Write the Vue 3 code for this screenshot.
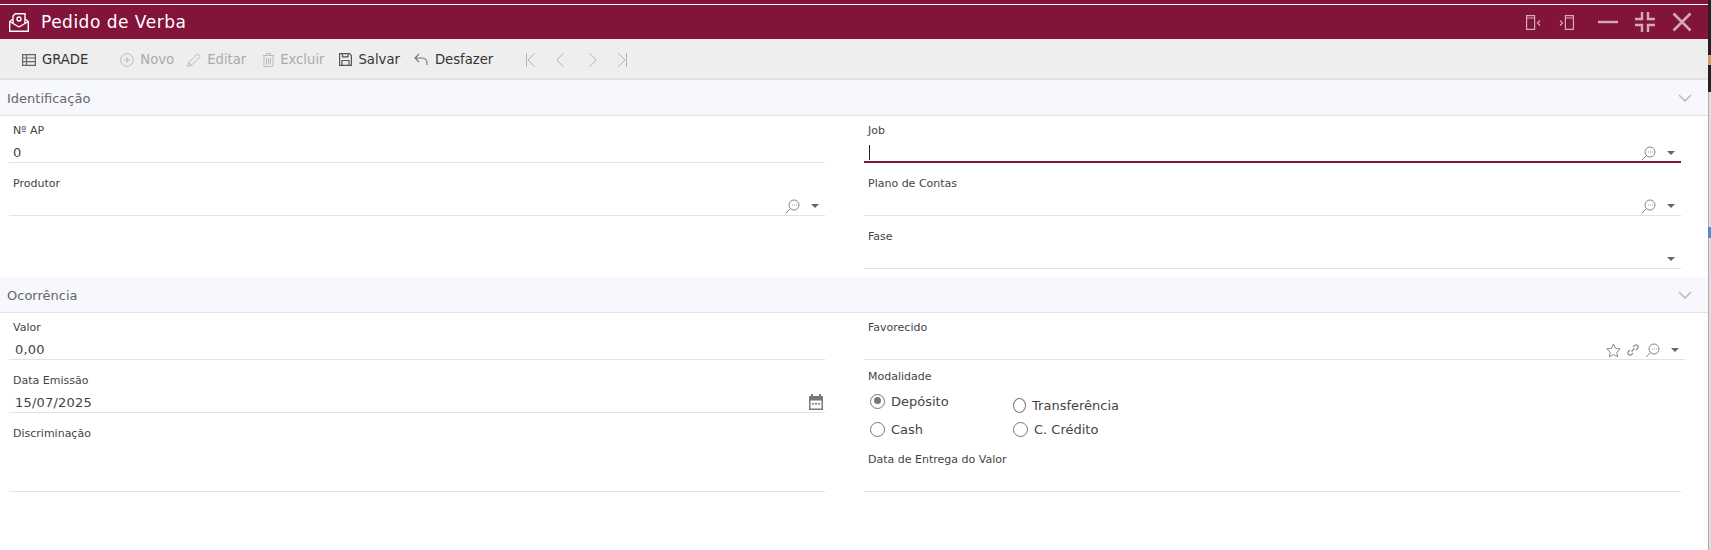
<template>
  <div class="page">
    <div class="window">
      <header class="titlebar">
        <div class="title">
          <svg class="title-icon" width="20" height="19" viewBox="0 0 20 19" fill="none" stroke="#fff" stroke-width="1.4">
            <path d="M4 6 .7 8.500v9.800h18.600V8.500L16 6" />
            <path d="M.7 8.500 10 14l9.300-5.500" />
            <path d="M4 10.500V3l2.300-2.300H16v9.800" />
            <circle cx="10" cy="6" r="2" />
          </svg>
          <span>Pedido de Verba</span>
        </div>
        <div class="win-buttons">
          <svg width="15" height="15" viewBox="0 0 15 15" fill="none" stroke="#d3aab9" stroke-width="1.200">
            <path d="M.6.6h8v13.800h-8zM.6 3h8" />
            <path d="M14 5.500 11.500 8l2.500 2.500" />
          </svg>
          <svg class="wb-second" width="15" height="15" viewBox="0 0 15 15" fill="none" stroke="#d3aab9" stroke-width="1.200">
            <path d="M6.400.6h8v13.800h-8zM6.400 3h8" />
            <path d="M1 5.500 3.500 8 1 10.500" />
          </svg>
          <svg class="wb-min" width="20" height="20" viewBox="0 0 20 20" fill="none" stroke="#d3aab9" stroke-width="2.400">
            <path d="M0 10h20" />
          </svg>
          <svg class="wb-max" width="20" height="20" viewBox="0 0 20 20" fill="none" stroke="#d3aab9" stroke-width="2.400">
            <path d="M7 0v7H0M13 0v7h7M7 20v-7H0M13 20v-7h7" />
          </svg>
          <svg class="wb-close" width="20" height="20" viewBox="0 0 20 20" fill="none" stroke="#d3aab9" stroke-width="2.600">
            <path d="M1.500 1.500l17 17M18.500 1.500l-17 17" />
          </svg>
        </div>
      </header>

      <nav class="toolbar">
        <button class="tool grade">
          <svg width="14" height="12" viewBox="0 0 14 12" fill="none" stroke="#666" stroke-width="1.200">
            <path d="M.6.6h12.800v10.800H.6zM.6 4h12.800M.6 7.700h12.800M4.500.6v10.800" />
          </svg>
          GRADE
        </button>
        <button class="tool off novo">
          <svg width="14" height="14" viewBox="0 0 14 14" fill="none" stroke="#bbb" stroke-width="1">
            <circle cx="7" cy="7" r="6.300" />
            <path d="M7 4v6M4 7h6" />
          </svg>
          Novo
        </button>
        <button class="tool off editar">
          <svg width="14" height="14" viewBox="0 0 14 14" fill="none" stroke="#bbb" stroke-width="1">
            <path d="M.7 13.300 1.700 9.500 10.500.8l2.700 2.700-8.800 8.800zM1.700 9.500l2.700 2.800" />
          </svg>
          Editar
        </button>
        <button class="tool off excluir">
          <svg width="11" height="14" viewBox="0 0 11 14" fill="none" stroke="#bbb" stroke-width="1">
            <path d="M0 2.500h11M3.500 2.500V.5h4v2M1 2.500v11h9v-11M3.500 5v6.500M5.500 5v6.500M7.500 5v6.500" />
          </svg>
          Excluir
        </button>
        <button class="tool salvar">
          <svg width="13" height="13" viewBox="0 0 13 13" fill="none" stroke="#555" stroke-width="1.200">
            <path d="M.6.6h9.800l2 2v9.800H.6zM3.500.6v3.200h5.500V.6M3 12.400V7.500h7v4.900" />
          </svg>
          Salvar
        </button>
        <button class="tool desfazer">
          <svg width="14" height="13" viewBox="0 0 14 13" fill="none" stroke="#777" stroke-width="1.100">
            <path d="M5 1 1 5l4 4M1 5h7c3 0 5 2 5 5v2" />
          </svg>
          Desfazer
        </button>
        <div class="pager">
          <svg width="10" height="14" viewBox="0 0 10 14" fill="none" stroke="#b5b5b5" stroke-width="1"><path d="M.5 0v14M9 0 2 7l7 7" /></svg>
          <svg class="p2" width="8" height="14" viewBox="0 0 8 14" fill="none" stroke="#b5b5b5" stroke-width="1"><path d="M7.500 0 1 7l6.500 7" /></svg>
          <svg class="p3" width="8" height="14" viewBox="0 0 8 14" fill="none" stroke="#b5b5b5" stroke-width="1"><path d="M.5 0 7 7l-6.500 7" /></svg>
          <svg class="p4" width="10" height="14" viewBox="0 0 10 14" fill="none" stroke="#b5b5b5" stroke-width="1"><path d="M9.500 0v14M1 0l7 7-7 7" /></svg>
        </div>
      </nav>

      <section class="section-head">
        <span>Identificação</span>
        <svg width="14" height="8" viewBox="0 0 14 8" fill="none" stroke="#bbb" stroke-width="1.500"><path d="M1 1l6 6 6-6" /></svg>
      </section>
      <div class="columns first">
        <div class="col">
          <div class="field">
            <label>Nº AP</label>
            <div class="value">0</div>
          </div>
          <div class="field">
            <label>Produtor</label>
            <div class="value">
              <span class="icons">
                <svg class="lookup" width="15" height="15" viewBox="0 0 15 15" fill="none" stroke="#888" stroke-width="1"><circle cx="9" cy="6" r="5" /><path d="M5.500 9.500 1 14M7 6h.8M9 6h.8M11 6h.8" /></svg>
                <i class="caret"></i>
              </span>
            </div>
          </div>
        </div>
        <div class="col">
          <div class="field focused">
            <label>Job</label>
            <div class="value">
              <i class="cursor"></i>
              <span class="icons">
                <svg class="lookup" width="15" height="15" viewBox="0 0 15 15" fill="none" stroke="#888" stroke-width="1"><circle cx="9" cy="6" r="5" /><path d="M5.500 9.500 1 14M7 6h.8M9 6h.8M11 6h.8" /></svg>
                <i class="caret"></i>
              </span>
            </div>
          </div>
          <div class="field">
            <label>Plano de Contas</label>
            <div class="value">
              <span class="icons">
                <svg class="lookup" width="15" height="15" viewBox="0 0 15 15" fill="none" stroke="#888" stroke-width="1"><circle cx="9" cy="6" r="5" /><path d="M5.500 9.500 1 14M7 6h.8M9 6h.8M11 6h.8" /></svg>
                <i class="caret"></i>
              </span>
            </div>
          </div>
          <div class="field">
            <label>Fase</label>
            <div class="value">
              <span class="icons"><i class="caret"></i></span>
            </div>
          </div>
        </div>
      </div>

      <section class="section-head">
        <span>Ocorrência</span>
        <svg width="14" height="8" viewBox="0 0 14 8" fill="none" stroke="#bbb" stroke-width="1.500"><path d="M1 1l6 6 6-6" /></svg>
      </section>
      <div class="columns">
        <div class="col">
          <div class="field">
            <label>Valor</label>
            <div class="value indent">0,00</div>
          </div>
          <div class="field">
            <label>Data Emissão</label>
            <div class="value indent">
              15/07/2025
              <span class="icons">
                <svg class="calendar" width="14" height="16" viewBox="0 0 14 16" fill="#777">
                  <path d="M2 0h2v2h6V0h2v2h2v14H0V2h2zM1.500 6.500v8h11v-8z" />
                  <path d="M3 9h2v1.500H3zM6 9h2v1.500H6zM9 9h2v1.500H9z" />
                </svg>
              </span>
            </div>
          </div>
          <div class="field tall">
            <label>Discriminação</label>
            <div class="value"></div>
          </div>
        </div>
        <div class="col">
          <div class="field wide">
            <label>Favorecido</label>
            <div class="value">
              <span class="icons">
                <svg class="star" width="15" height="15" viewBox="0 0 15 15" fill="none" stroke="#888" stroke-width="1"><path d="M7.500 1l2 4.300 4.700.6-3.400 3.200.9 4.700-4.200-2.300-4.200 2.300.9-4.700L.8 5.900l4.700-.6z" /></svg>
                <svg class="link" width="12" height="12" viewBox="0 0 12 12" fill="none" stroke="#888" stroke-width="1.100"><path d="M4.500 7.500l3-3M6 3l1.500-1.500a2.100 2.100 0 0 1 3 3L9 6M6 9l-1.500 1.500a2.100 2.100 0 0 1-3-3L3 6" /></svg>
                <svg class="lookup" width="15" height="15" viewBox="0 0 15 15" fill="none" stroke="#888" stroke-width="1"><circle cx="9" cy="6" r="5" /><path d="M5.500 9.500 1 14M7 6h.8M9 6h.8M11 6h.8" /></svg>
                <i class="caret"></i>
              </span>
            </div>
          </div>
          <div class="radio-field">
            <label>Modalidade</label>
            <div class="radios">
              <div class="radio-col">
                <div class="radio"><i class="dot on"></i>Depósito</div>
                <div class="radio"><i class="dot"></i>Cash</div>
              </div>
              <div class="radio-col second">
                <div class="radio"><i class="dot"></i>Transferência</div>
                <div class="radio"><i class="dot"></i>C. Crédito</div>
              </div>
            </div>
          </div>
          <div class="field entrega">
            <label>Data de Entrega do Valor</label>
            <div class="value"></div>
          </div>
        </div>
      </div>
    </div>
    <aside class="edge">
      <div class="edge-dark"><i class="mark-orange"></i></div>
      <i class="mark-blue"></i>
    </aside>
  </div>
</template>

<script setup>
</script>

<style>
body {
  margin: 0;
  background: #fff;
}
</style>

<style scoped>
.page {
  display: flex;
  height: 550px;
  font-family: "DejaVu Sans", sans-serif;
  color: #444;
  overflow: hidden;
}

.window {
  flex: 1;
  min-width: 0;
}

.edge {
  width: 3px;
  background: linear-gradient(90deg, #aaa 1px, #dedede 1px);
}

.edge-dark {
  height: 92px;
  padding-top: 55px;
  box-sizing: border-box;
  background: #222;
}

.mark-orange {
  display: block;
  height: 10px;
  background: #c8a060;
}

.mark-blue {
  display: block;
  height: 11px;
  margin-top: 135px;
  background: #4a8fd0;
}

.titlebar {
  box-sizing: border-box;
  display: flex;
  justify-content: space-between;
  align-items: center;
  height: 39px;
  padding: 5px 16px 0 9px;
  background: #82133a;
  box-shadow: inset 0 4px 0 #82133a, inset 0 5px 0 #fff;
}

.title {
  display: flex;
  align-items: center;
  gap: 12px;
  color: #fff;
  font-size: 17px;
  letter-spacing: 0.5px;
}

.win-buttons {
  display: flex;
  align-items: center;
}

.wb-second {
  margin-left: 18px;
}

.wb-min {
  margin-left: 24px;
}

.wb-max {
  margin-left: 17px;
}

.wb-close {
  margin-left: 17px;
}

.toolbar {
  box-sizing: border-box;
  display: flex;
  align-items: center;
  height: 41px;
  padding: 2px 0 0 22px;
  background: #eee;
  border-bottom: 2px solid #e2e2e2;
}

.tool {
  display: flex;
  align-items: center;
  gap: 6px;
  padding: 0;
  border: 0;
  background: none;
  font: inherit;
  font-size: 13.200px;
  color: #333;
}

.tool.off {
  color: #aaa;
}

.novo {
  margin-left: 32px;
}

.editar {
  margin-left: 13px;
}

.excluir {
  margin-left: 17px;
}

.salvar {
  margin-left: 15px;
}

.desfazer {
  margin-left: 14px;
  gap: 7px;
}

.pager {
  display: flex;
  align-items: center;
  margin-left: 33px;
}

.p2 {
  margin-left: 20px;
}

.p3 {
  margin-left: 25px;
}

.p4 {
  margin-left: 20px;
}

.section-head {
  box-sizing: border-box;
  display: flex;
  justify-content: space-between;
  align-items: center;
  height: 36px;
  padding: 1px 16px 0 7px;
  background: #f7f8fd;
  border-bottom: 1px solid #e2e2e2;
  font-size: 13px;
  color: #666;
}

.columns {
  display: flex;
  gap: 39px;
  padding: 0 27px 0 9px;
}

.columns.first {
  padding-bottom: 8px;
}

.col {
  flex: 1;
  min-width: 0;
}

.col:first-child {
  flex: 0 0 816px;
}

.field {
  box-sizing: border-box;
  height: 47px;
  margin-top: 6px;
  padding-left: 4px;
  border-bottom: 1px solid #e2e2e2;
}

.field:first-child {
  margin-top: 0;
}

.field label,
.radio-field label {
  display: block;
  padding-top: 8px;
  font-size: 11px;
  line-height: 14px;
}

.value {
  position: relative;
  height: 22px;
  margin-top: 4px;
  font-size: 13px;
  line-height: 22px;
  letter-spacing: 0.2px;
}

.value.indent {
  padding-left: 2px;
}

.field.tall {
  height: 73px;
}

.field.wide {
  margin-right: -4px;
}

.field.focused {
  border-bottom: 2px solid #82133a;
}

.field.entrega {
  margin-top: 0;
}

.cursor {
  position: absolute;
  left: 1px;
  top: 3px;
  width: 1px;
  height: 15px;
  background: #222;
}

.icons {
  position: absolute;
  right: 6px;
  top: 0;
  display: flex;
  align-items: center;
  height: 22px;
}

.lookup {
  margin-right: 11px;
}

.caret {
  width: 0;
  height: 0;
  border-left: 4px solid transparent;
  border-right: 4px solid transparent;
  border-top: 4px solid #666;
}

.star {
  margin-right: 6px;
}

.link {
  margin-right: 6px;
}

.calendar {
  margin-top: -2px;
  margin-right: -4px;
}

.radio-field {
  height: 85px;
  padding-left: 4px;
}

.radio-field label {
  padding-top: 10px;
}

.radios {
  display: flex;
  gap: 37px;
  margin-top: 5px;
  padding-left: 2px;
  font-size: 13px;
}

.radio-col {
  width: 106px;
}

.radio-col.second {
  padding-top: 4px;
}

.radio {
  display: flex;
  align-items: center;
  gap: 6px;
  height: 24px;
  margin-bottom: 4px;
}

.radio-col.second .radio {
  margin-bottom: 0;
}

.dot {
  position: relative;
  box-sizing: border-box;
  width: 15px;
  height: 15px;
  border: 1.500px solid #777;
  border-radius: 50%;
}

.dot.on::after {
  content: "";
  position: absolute;
  left: 2.500px;
  top: 2.500px;
  width: 7px;
  height: 7px;
  border-radius: 50%;
  background: #777;
}
</style>
